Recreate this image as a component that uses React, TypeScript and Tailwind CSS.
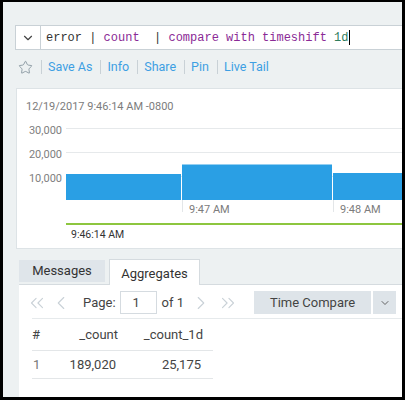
import { ChevronDown, ChevronLeft, ChevronRight, ChevronsLeft, ChevronsRight, Star } from "lucide-react";

const actions = ["Save As", "Info", "Share", "Pin", "Live Tail"];

function QueryBar() {
  return (
    <div className="ml-[12px] mt-[23px] flex h-[25px] w-[420px] shrink-0 border border-[#c9d1d6] bg-white">
      <div className="flex w-[25px] items-center justify-center border-r border-[#c9d1d6]">
        <ChevronDown size={14} strokeWidth={2} className="text-[#444]" />
      </div>
      <div className="flex items-center pl-[5px] font-['Liberation_Mono',monospace] text-[12px] whitespace-pre text-[#333]">
        <span>error | </span>
        <span className="text-[#8b2a96]">count</span>
        <span>  | </span>
        <span className="text-[#8b2a96]">compare with timeshift </span>
        <span className="text-[#2f7d5c]">1d</span>
        <span className="ml-px h-[15px] w-px bg-black" />
      </div>
    </div>
  );
}

function Toolbar() {
  return (
    <div className="ml-[15px] mt-[8px] flex h-[18px] items-center text-[12.5px] text-[#3d9fe3]">
      <Star size={15} strokeWidth={1.3} className="text-[#7d8c96]" />
      {actions.map((a) => (
        <div key={a} className="flex items-center">
          <span className="ml-[8px] mr-[6px] h-[14px] w-px bg-[#c9d1d6]" />
          <span>{a}</span>
        </div>
      ))}
    </div>
  );
}

function Chart() {
  return (
    <div className="ml-[13px] mt-[12px] h-[161px] w-[420px] shrink-0 border border-[#dde3e6] bg-white">
      <svg width="420" height="159" className="font-['Roboto',sans-serif]">
        <text x="9" y="21" fontSize="11" fill="#7c7c7c">12/19/2017 9:46:14 AM -0800</text>
        <g fontSize="11" fill="#808080" textAnchor="end">
          <text x="45" y="45">30,000</text>
          <text x="45" y="69">20,000</text>
          <text x="45" y="93">10,000</text>
        </g>
        <line x1="49" y1="39.5" x2="420" y2="39.5" stroke="#e6e9eb" />
        <line x1="49" y1="63.5" x2="420" y2="63.5" stroke="#e6e9eb" />
        <line x1="49" y1="87.5" x2="420" y2="87.5" stroke="#e6e9eb" />
        <rect x="49" y="85" width="115" height="26" fill="#2a9fe4" />
        <rect x="165" y="75.5" width="150" height="35.5" fill="#2a9fe4" />
        <rect x="316" y="84" width="100" height="27" fill="#2a9fe4" />
        <line x1="165.5" y1="111" x2="165.5" y2="123" stroke="#e3e6e8" />
        <line x1="316.5" y1="111" x2="316.5" y2="123" stroke="#e3e6e8" />
        <text x="172" y="124" fontSize="11" fill="#7c7c7c">9:47 AM</text>
        <text x="323" y="124" fontSize="11" fill="#7c7c7c">9:48 AM</text>
        <line x1="49" y1="135" x2="420" y2="135" stroke="#8dc63f" strokeWidth="2" />
        <text x="54" y="149" fontSize="10.5" fill="#333">9:46:14 AM</text>
      </svg>
    </div>
  );
}

function Tabs() {
  return (
    <div className="ml-[16px] mt-[10px] flex h-[25px] shrink-0 items-start text-[13px] text-[#333]">
      <div className="mt-px flex h-[22px] w-[86px] items-center justify-center bg-[#dfe5ea]">Messages</div>
      <div className="relative z-10 ml-[4px] flex h-[26px] w-[91px] items-center justify-center border border-b-0 border-[#d5dbdf] bg-white pt-[2px]">
        Aggregates
      </div>
    </div>
  );
}

function Pager() {
  return (
    <div className="flex h-[23px] items-center text-[13px] text-[#444]">
      <div className="ml-[6px] flex w-[24px] justify-center text-[#c9d1d7]">
        <ChevronsLeft size={22} strokeWidth={1.2} />
      </div>
      <div className="flex w-[24px] justify-center text-[#c9d1d7]">
        <ChevronLeft size={22} strokeWidth={1.2} />
      </div>
      <span className="ml-[10px]">Page:</span>
      <div className="ml-[4px] flex h-[23px] w-[37px] items-center justify-center border border-[#d5dbe0] pr-[4px]">1</div>
      <span className="ml-[5px]">of 1</span>
      <div className="ml-[5px] flex w-[24px] justify-center text-[#c9d1d7]">
        <ChevronRight size={22} strokeWidth={1.2} />
      </div>
      <div className="ml-[3px] flex w-[24px] justify-center text-[#c9d1d7]">
        <ChevronsRight size={22} strokeWidth={1.2} />
      </div>
      <div className="ml-[14px] flex h-[23px] w-[117px] items-center justify-center bg-[#dee4e9]">Time Compare</div>
      <div className="ml-[2px] flex h-[23px] w-[23px] items-center justify-center bg-[#dee4e9]">
        <ChevronDown size={12} strokeWidth={1.8} className="text-[#555]" />
      </div>
    </div>
  );
}

function ResultTable() {
  return (
    <div className="ml-[13px] mt-[4px] border-t border-[#e6eaec] text-[13px] text-[#444]">
      <div className="flex h-[32px] w-[181px] items-center border-b border-[#e3e6e8]">
        <span className="w-[32px]">#</span>
        <span className="w-[60px] pr-[6px] text-right">_count</span>
        <span className="w-[79px] text-right">_count_1d</span>
      </div>
      <div className="flex h-[28px] w-[181px] items-center border-b border-[#e3e6e8]">
        <span className="w-[32px] pl-px text-[#777]">1</span>
        <span className="w-[60px] pr-[8px] text-right">189,020</span>
        <span className="w-[77px] text-right">25,175</span>
      </div>
    </div>
  );
}

export default function App() {
  return (
    <div className="h-[400px] w-[405px] border-b-[3px] border-l-[3px] border-r-[3px] border-t-[2px] border-black bg-black font-['Roboto',sans-serif]">
      <div className="flex h-full w-full flex-col overflow-hidden bg-[#edf1f2]">
        <QueryBar />
        <Toolbar />
        <Chart />
        <Tabs />
        <div className="ml-[16px] flex-1 border-t border-[#d5dbdf] bg-white pt-[6px]">
          <Pager />
          <ResultTable />
        </div>
      </div>
    </div>
  );
}
